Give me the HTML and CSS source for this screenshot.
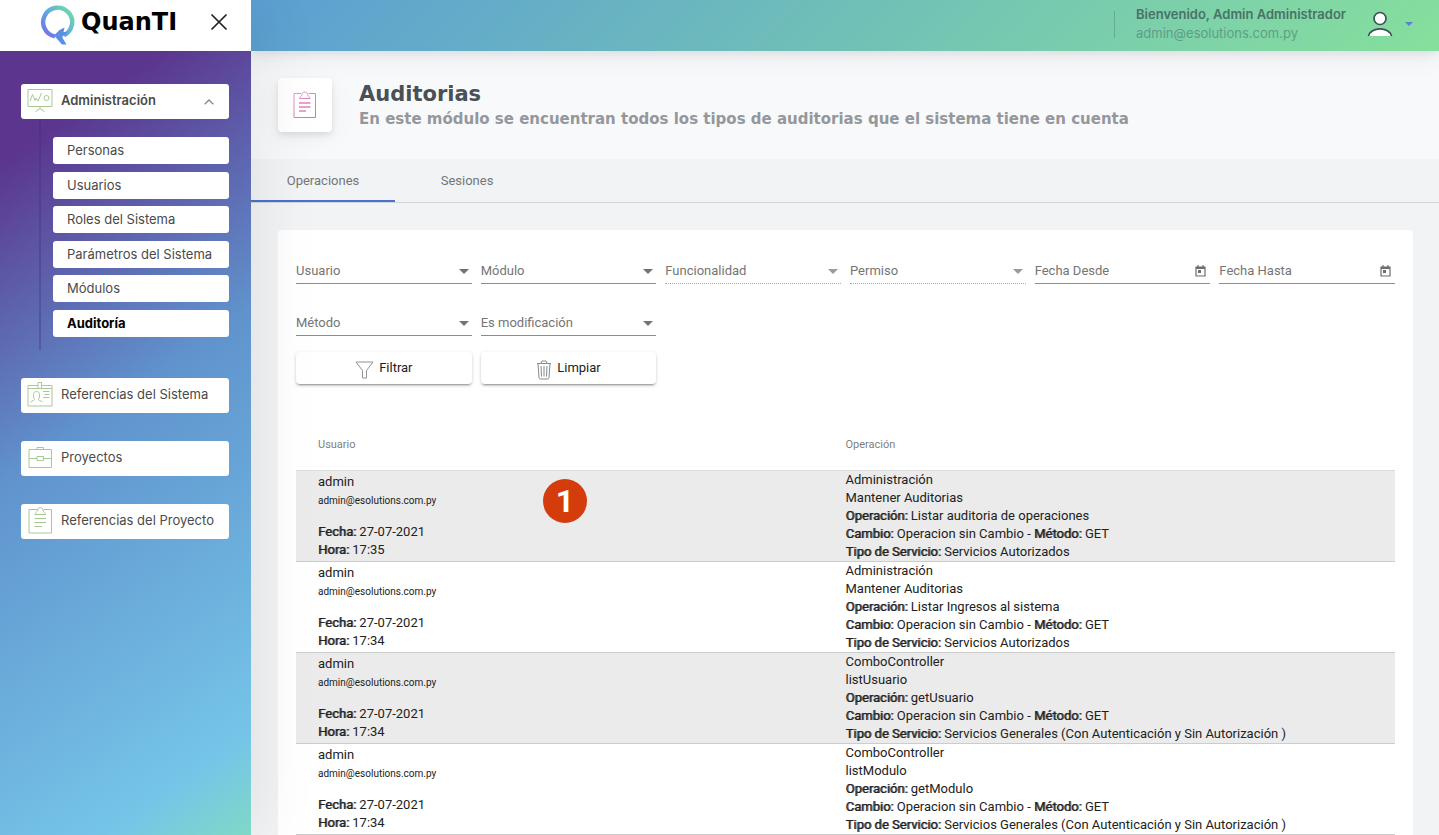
FILE: index.html
```html
<!DOCTYPE html>
<html lang="es">
<head>
<meta charset="utf-8">
<title>QuanTI - Auditorias</title>
<link rel="stylesheet" href="styles.css">
</head>
<body>
<div class="app">
  <aside class="sidebar">
    <div class="brand">
      <a class="logo" href="#">
        <svg class="logo-mark" width="36" height="42" viewBox="0 0 36 42" fill="none">
          <defs>
            <linearGradient id="ring" x1="2" y1="34" x2="33" y2="6" gradientUnits="userSpaceOnUse">
              <stop offset="0" stop-color="#7a63e6"/><stop offset=".5" stop-color="#5fa9e2"/><stop offset="1" stop-color="#6fdfa8"/>
            </linearGradient>
          </defs>
          <path d="M15 32.4A14.5 14.5 0 1 1 24 31.2" stroke="url(#ring)" stroke-width="4.4"/>
          <path d="M19.500 26 24.500 23.500 23.500 28 27.500 28.500 22 33 26.500 40.500H22L14 31.500Z" fill="#5b8fe2"/>
        </svg>
        <span class="logo-text">QuanTI</span>
      </a>
      <button class="close" type="button" aria-label="Cerrar menú">
        <svg width="18" height="18" viewBox="0 0 18 18" fill="none" stroke="#222" stroke-width="1.700"><path d="M1.500 1.500 16.500 16.500M16.500 1.500 1.500 16.500"/></svg>
      </button>
    </div>
    <nav class="menu">
      <div class="group">
        <button class="menu-item open" type="button" aria-expanded="true">
          <svg class="menu-icon" width="26" height="26" viewBox="0 0 26 26" fill="none" stroke="#a9c795"><path d="M1 2.500H25V19.500H1ZM13 19.500V21.500M8.500 24.500 13 21.500 17.500 24.500M3 14 5.500 7.500 8 13.500 9 11 11 14 14.500 6"/><circle cx="19.500" cy="11" r="2.500"/></svg>
          <span>Administración</span>
          <svg class="chevron" width="10" height="6" viewBox="0 0 10 6" fill="none" stroke="#888" stroke-width="1.300"><path d="M.7 5.300 5 1 9.300 5.300"/></svg>
        </button>
        <div class="submenu">
          <a href="#">Personas</a>
          <a href="#">Usuarios</a>
          <a href="#">Roles del Sistema</a>
          <a href="#">Parámetros del Sistema</a>
          <a href="#">Módulos</a>
          <a class="current" href="#" aria-current="page">Auditoría</a>
        </div>
      </div>
      <button class="menu-item" type="button">
        <svg class="menu-icon" width="26" height="26" viewBox="0 0 26 26" fill="none" stroke="#a9c795"><path d="M11 4.500H1V25H25V4.500H14.500M1 7.500H11M14.500 7.500H25M11 1.500H14.500V7.500H11ZM3.500 21C5 19.500 7 20 7.500 18.500 6 16 5.500 10.500 9.500 10.500S13 16 11.500 18.500C12 20 14 19.500 15.500 21M16 10.500H22.500M17.500 13.500H22.500M16 16.500H22.500"/></svg>
        <span>Referencias del Sistema</span>
      </button>
      <button class="menu-item" type="button">
        <svg class="menu-icon" width="26" height="26" viewBox="0 0 26 26" fill="none" stroke="#a9c795"><path d="M2 5.500H24.500V23.500H2ZM10 5.500V3.500H16.500V5.500M2 14.500H10M16.500 14.500H24.500M10 12.500H16.500V16.500H10Z"/></svg>
        <span>Proyectos</span>
      </button>
      <button class="menu-item" type="button">
        <svg class="menu-icon" width="26" height="28" viewBox="0 0 26 28" fill="none" stroke="#a9c795"><path d="M10 3.500H2V27H24.500V3.500H16.500M8 8.500H18.500C18.500 6 16 6.500 16 4 16 .8 10.500 .8 10.500 4 10.500 6.500 8 6 8 8.500ZM7.500 12.500H19M7.500 16.500H19M7.500 20.500H15"/></svg>
        <span>Referencias del Proyecto</span>
      </button>
    </nav>
  </aside>
  <div class="content">
    <header class="topbar">
      <div class="user">
        <strong>Bienvenido, Admin Administrador</strong>
        <span>admin@esolutions.com.py</span>
      </div>
      <button class="account" type="button" aria-label="Cuenta">
        <svg width="26" height="26" viewBox="0 0 26 26" fill="#fff" stroke="#3f5057" stroke-width="1.700"><circle cx="13" cy="7.500" r="6"/><path d="M1.800 25C3 15.800 23 15.800 24.200 25Z" stroke="none"/><path d="M1.500 25C3.500 15.500 22.500 15.500 24.500 25" fill="none"/></svg>
        <svg width="8" height="4" viewBox="0 0 8 4"><path d="M0 0H8L4 4Z" fill="#5382d6"/></svg>
      </button>
    </header>
    <main>
      <section class="page-title">
        <div class="title-icon">
          <svg width="24" height="28" viewBox="0 0 24 28" fill="none" stroke="url(#pink)">
            <defs><linearGradient id="pink" x1="0" y1="0" x2="24" y2="28" gradientUnits="userSpaceOnUse"><stop offset="0" stop-color="#dc9cec"/><stop offset="1" stop-color="#d8707e"/></linearGradient></defs>
            <path d="M8 2.500H1V26.500H22.500V2.500H15.500M6.500 7.500H17C17 5 14.500 5.500 14.500 3.500 14.500 .2 9 .2 9 3.500 9 5.500 6.500 5 6.500 7.500Z"/>
            <path d="M6 12H17.500M6 16H17.500M6 20H13" stroke="#dc88b8" stroke-width="1.300"/>
          </svg>
        </div>
        <div>
          <h1>Auditorias</h1>
          <p>En este módulo se encuentran todos los tipos de auditorias que el sistema tiene en cuenta</p>
        </div>
      </section>
      <div class="tabs" role="tablist">
        <button class="tab selected" type="button" role="tab" aria-selected="true">Operaciones</button>
        <button class="tab" type="button" role="tab" aria-selected="false">Sesiones</button>
      </div>
      <section class="card">
        <form class="filters">
          <div class="field"><select aria-label="Usuario"><option>Usuario</option></select></div>
          <div class="field"><select aria-label="Módulo"><option>Módulo</option></select></div>
          <div class="field off"><select aria-label="Funcionalidad" disabled><option>Funcionalidad</option></select></div>
          <div class="field off"><select aria-label="Permiso" disabled><option>Permiso</option></select></div>
          <div class="field date"><input type="text" aria-label="Fecha Desde" placeholder="Fecha Desde">
            <button type="button" aria-label="Elegir fecha desde"><svg width="11" height="12" viewBox="0 0 11 12" fill="none" stroke="#6d6d6d"><path d="M1 2H10V11H1ZM3 0V2M8 0V2" stroke-width="1.200"/><path d="M1 3H10" stroke-width="2"/><path d="M3 5H6V8H3Z" fill="#6d6d6d" stroke="none"/></svg></button></div>
          <div class="field date"><input type="text" aria-label="Fecha Hasta" placeholder="Fecha Hasta">
            <button type="button" aria-label="Elegir fecha hasta"><svg width="11" height="12" viewBox="0 0 11 12" fill="none" stroke="#6d6d6d"><path d="M1 2H10V11H1ZM3 0V2M8 0V2" stroke-width="1.200"/><path d="M1 3H10" stroke-width="2"/><path d="M3 5H6V8H3Z" fill="#6d6d6d" stroke="none"/></svg></button></div>
          <div class="field"><select aria-label="Método"><option>Método</option></select></div>
          <div class="field"><select aria-label="Es modificación"><option>Es modificación</option></select></div>
        </form>
        <div class="actions">
          <button type="button"><svg width="19" height="18" viewBox="0 0 19 18" fill="none" stroke="#8f9296"><path d="M1 1H18L11.500 9.500V17H7.500V9.500Z"/></svg>Filtrar</button>
          <button class="clear" type="button"><svg width="16" height="20" viewBox="0 0 16 20" fill="none" stroke="#85888c"><path d="M1 3.500H15M2 3.500 3 17.500Q3.200 19 4.500 19H11.500Q12.800 19 13 17.500L14 3.500M5 3 6 1H10L11 3M5 6 5.500 16.500M8 6V16.500M11 6 10.500 16.500"/></svg>Limpiar</button>
        </div>
        <table class="log">
          <thead><tr><th scope="col">Usuario</th><th scope="col">Operación</th></tr></thead>
          <tbody>
            <tr>
              <td><div>admin</div><div class="mail">admin@esolutions.com.py</div><div><b>Fecha:</b> 27-07-2021</div><div><b>Hora:</b> 17:35</div><span class="badge">1</span></td>
              <td><div>Administración</div><div>Mantener Auditorias</div><div><b>Operación:</b> Listar auditoria de operaciones</div><div><b>Cambio:</b> Operacion sin Cambio - <b>Método:</b> GET</div><div><b>Tipo de Servicio:</b> Servicios Autorizados</div></td>
            </tr>
            <tr>
              <td><div>admin</div><div class="mail">admin@esolutions.com.py</div><div><b>Fecha:</b> 27-07-2021</div><div><b>Hora:</b> 17:34</div></td>
              <td><div>Administración</div><div>Mantener Auditorias</div><div><b>Operación:</b> Listar Ingresos al sistema</div><div><b>Cambio:</b> Operacion sin Cambio - <b>Método:</b> GET</div><div><b>Tipo de Servicio:</b> Servicios Autorizados</div></td>
            </tr>
            <tr>
              <td><div>admin</div><div class="mail">admin@esolutions.com.py</div><div><b>Fecha:</b> 27-07-2021</div><div><b>Hora:</b> 17:34</div></td>
              <td><div>ComboController</div><div>listUsuario</div><div><b>Operación:</b> getUsuario</div><div><b>Cambio:</b> Operacion sin Cambio - <b>Método:</b> GET</div><div><b>Tipo de Servicio:</b> Servicios Generales (Con Autenticación y Sin Autorización )</div></td>
            </tr>
            <tr>
              <td><div>admin</div><div class="mail">admin@esolutions.com.py</div><div><b>Fecha:</b> 27-07-2021</div><div><b>Hora:</b> 17:34</div></td>
              <td><div>ComboController</div><div>listModulo</div><div><b>Operación:</b> getModulo</div><div><b>Cambio:</b> Operacion sin Cambio - <b>Método:</b> GET</div><div><b>Tipo de Servicio:</b> Servicios Generales (Con Autenticación y Sin Autorización )</div></td>
            </tr>
          </tbody>
        </table>
      </section>
    </main>
  </div>
</div>
</body>
</html>
```
FILE: styles.css
```css
* { box-sizing: border-box; }
body { margin: 0; background: #f1f3f5; font: 13px/18px Roboto, sans-serif; color: #212121; }
button, select, input { font: inherit; color: inherit; border: 0; background: none; padding: 0; margin: 0; border-radius: 0; }
button { cursor: pointer; }
a { color: inherit; text-decoration: none; }
svg { display: block; flex: none; }

.app { display: flex; min-height: 100vh; }
.content { flex: 1; min-width: 0; display: flex; flex-direction: column; }

/* Sidebar */
.sidebar {
  width: 251px; flex: none; position: relative; z-index: 2;
  background: linear-gradient(145deg, #5b358e 16%, #6093cd 48%, #75c5e8 90%, #80d8c6 100%);
  box-shadow: 7px 0 60px rgba(8, 10, 12, .08);
  font-family: Inter, sans-serif; color: #4a4a4a;
}
.brand { height: 51px; background: #fff; display: flex; align-items: center; justify-content: space-between; padding: 0 23px 7px 40px; }
.logo { display: flex; align-items: center; gap: 5px; color: #000; }
.logo-mark { margin-top: 6px; }
.logo-text { font: bold 24px/28px "DejaVu Sans", sans-serif; }
.menu { display: flex; flex-direction: column; gap: 28px; padding: 33px 22px 28px 21px; }
.menu-item { width: 100%; height: 35px; display: flex; align-items: center; gap: 8px; padding: 0 15px 3px 6px; background: #fff; border-radius: 3px; text-align: left; }
.menu-item.open { font-weight: 600; }
.chevron { margin: 4px 0 0 auto; }
.submenu { margin-left: 18px; border-left: 2px solid rgba(60, 50, 130, .35); padding: 18px 0 13px 12px; min-height: 231px; display: flex; flex-direction: column; justify-content: space-between; }
.submenu a { background: #fff; border-radius: 3px; padding: 0 14px; line-height: 27px; }
.submenu .current { font-weight: 700; color: #000; }

/* Top bar */
.topbar {
  height: 51px; display: flex; justify-content: flex-end; padding: 5px 26px 0;
  background: linear-gradient(135deg, #5b9fd3, #86e09c); position: relative; z-index: 1;
  box-shadow: 0 8px 26px rgba(4, 9, 20, .06), 0 2px 10px rgba(4, 9, 20, .08);
  font-family: Inter, sans-serif; line-height: 19px;
}
.user { display: flex; flex-direction: column; color: #5f9d87; position: relative; padding-left: 22px; }
.user::before { content: ""; position: absolute; left: 0; top: 6px; height: 27px; border-left: 1px solid #5fae92; }
.user strong { color: #4a7267; font-weight: 600; }
.account { display: flex; align-items: center; gap: 12px; margin-left: 21px; height: 38px; }

/* Page title */
main { flex: 1; display: flex; flex-direction: column; }
.page-title { display: flex; gap: 27px; padding: 27px; background: #f8f9fb; }
.title-icon { width: 54px; height: 54px; flex: none; display: flex; align-items: center; justify-content: center; background: #fff; border-radius: 4px; box-shadow: 0 7px 32px rgba(4, 9, 20, .04), 0 4px 8px rgba(4, 9, 20, .08), 0 2px 4px rgba(4, 9, 20, .04); }
h1, p { margin: 0; font-family: "DejaVu Sans", sans-serif; font-weight: 700; }
h1 { font-size: 21px; line-height: 32px; color: #495057; }
p { font-size: 15px; line-height: 18px; color: #94979b; }

/* Tabs */
.tabs { display: flex; border-bottom: 1px solid #d2d5d9; }
.tab { width: 144px; height: 43px; padding-top: 2px; color: #757678; border-bottom: 2px solid transparent; }
.tab.selected { border-color: #4d6fd0; }

/* Filters */
.card { flex: 1; margin: 27px 26px 0 27px; padding: 22px 18px 0; background: #fff; border-radius: 4px 4px 0 0; }
.filters, .actions { display: grid; grid-template-columns: repeat(6, minmax(0, 1fr)); gap: 20px 9px; }
.field { display: flex; align-items: center; height: 32px; padding-top: 6px; border-bottom: 1px solid #8c8c8c; color: #757575; position: relative; }
.field select, .field input { flex: 1; min-width: 0; appearance: none; outline: 0; opacity: 1; height: 24px; }
.field input::placeholder { color: #757575; opacity: 1; }
.field:not(.date)::after { content: ""; position: absolute; right: 3px; top: 17px; border: 5px solid transparent; border-top-color: #737373; border-bottom: 0; pointer-events: none; }
.field.off { border-bottom: 1px dotted #aaa; }
.field.off::after { border-top-color: #9b9b9b; }
.date button { padding: 0 4px; }
.actions { margin-top: 16px; }
.actions button { height: 32px; display: flex; align-items: center; justify-content: center; gap: 5px; background: #fff; border-radius: 4px; box-shadow: 0 3px 1px -2px rgba(0, 0, 0, .2), 0 2px 2px rgba(0, 0, 0, .14), 0 1px 4px rgba(0, 0, 0, .12); }
.actions svg { margin-top: 3px; }

/* Audit log */
.log { width: 100%; margin-top: 34px; border-collapse: separate; border-spacing: 0; table-layout: fixed; }
.log th { height: 53px; padding: 2px 0 0; text-align: left; font-size: 11px; font-weight: 400; color: #808080; border-bottom: 1px solid #dcdcdc; }
.log td { height: 91px; padding: 0; vertical-align: middle; border-bottom: 1px solid #ccc; position: relative; }
.log th:first-child, .log td:first-child { padding-left: 22px; }
.log tbody tr:nth-child(odd) { background: #ebebeb; }
.log b { font-weight: 400; text-shadow: 1px 0 rgba(33, 33, 33, .7); }
.log .mail { font-size: 10px; line-height: 20px; margin-bottom: 12px; }
.badge { position: absolute; left: 247px; top: 8px; width: 44px; height: 44px; border-radius: 50%; background: #d43c0c; color: #fff; font: bold 32px/44px Roboto, sans-serif; text-align: center; }
```
